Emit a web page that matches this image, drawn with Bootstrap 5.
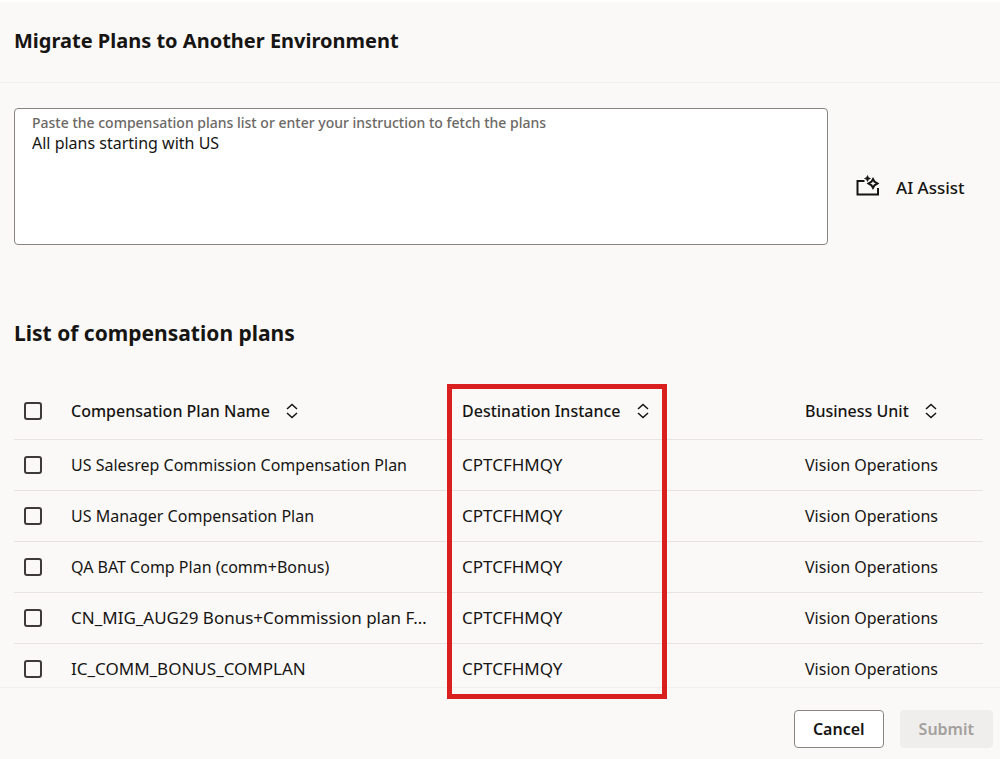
<!DOCTYPE html>
<html lang="en">
<head>
<meta charset="utf-8">
<meta name="viewport" content="width=device-width, initial-scale=1">
<title>Migrate Plans to Another Environment</title>
<link rel="stylesheet" href="https://cdn.jsdelivr.net/npm/bootstrap@5.3.0/dist/css/bootstrap.min.css">
<style>
  body {
    font-family: "Noto Sans", "Open Sans", sans-serif;
    font-size: 16px;
    line-height: 24px;
    color: #161513;
    background: #fbf9f8;
    border-top: 2px solid #fff;
  }
  .page-head { padding: 25px 14px 27px; border-bottom: 1px solid #f1efed; }
  .page-head h1 { font-size: 20px; line-height: 28px; font-weight: 700; }
  .page-main { padding: 25px 17px 0 14px; }
  .section-title { margin: 74px 0 37px; font-size: 21px; line-height: 28px; font-weight: 700; }

  .prompt-box {
    height: 137px;
    padding: 5px 17px;
    background: #fff;
    border: 1px solid #8b8580;
    border-radius: 4px;
  }
  .prompt-box label { font-size: 14px; line-height: 18px; font-weight: 500; color: #6b6865; }
  .prompt-box textarea { resize: none; outline: 0; line-height: 22px; color: inherit; }
  .assist-btn { width: 155px; padding: 22px 0 0 28px; color: inherit; font-size: 17px; font-weight: 500; }

  .plans { table-layout: fixed; }
  .plans th { height: 55px; padding: 0; font-weight: 500; white-space: nowrap; }
  .plans td { height: 51px; padding: 0; white-space: nowrap; }
  .plans tr { border-bottom: 1px solid #e6e3e1; }
  .plans tbody tr:last-child { border-bottom: 0; }
  .plans tbody tr:last-child td { height: 44px; padding-top: 8px; }
  .plans .col-check { width: 57px; padding-left: 10px; }
  .plans .col-name { width: 39%; }
  .plans .col-dest { width: 220px; padding-left: 15px; }
  .plans td.col-dest, .plans .plan-code { font-size: 17px; }
  .plans .col-unit { width: 316px; padding-left: 138px; }
  .plans input {
    appearance: none;
    width: 18px;
    height: 18px;
    border: 2px solid #3d3a37;
    border-radius: 3px;
    background: transparent;
  }
  .plans input:checked { background: #3d3a37; }
  .plans .col-name { width: auto; }
  .sort-btn { font-weight: 500; color: inherit; }
  .highlight-frame {
    top: 0;
    left: 0;
    width: 100%;
    height: 315px;
    border: 5px solid #d9201f;
    pointer-events: none;
  }

  .page-foot { padding: 22px 7px 11px; border-top: 1px solid #f1efed; }
  .page-foot .btn { height: 38px; padding: 0 18px; font-weight: 600; line-height: 24px; border-radius: 4px; }
  .btn-cancel, .btn-cancel:hover { color: #161513; background: #fff; border: 1px solid #8b8580; }
  .page-foot .btn-submit:disabled { color: #a3a09d; background: #f0eeec; border-color: #f0eeec; opacity: 1; }
</style>
</head>
<body>
<header class="page-head">
  <h1 class="m-0">Migrate Plans to Another Environment</h1>
</header>

<main class="page-main">
  <div class="d-flex align-items-center">
    <div class="prompt-box flex-grow-1 d-flex flex-column">
      <label for="prompt">Paste the compensation plans list or enter your instruction to fetch the plans</label>
      <textarea id="prompt" class="flex-grow-1 w-100 border-0 p-0 bg-transparent">All plans starting with US</textarea>
    </div>
    <button type="button" class="assist-btn btn border-0 d-flex align-items-center gap-3 rounded-0 text-nowrap">
      <svg class="mb-1" width="24" height="22" viewBox="0 0 24 22" fill="none" stroke="#161513" stroke-width="2" aria-hidden="true">
        <path d="M8.500 6H1.500v13.500h20.500V13"/>
        <path d="M17 4l1.500 2.700L21.500 8.500l-3 1.800L17 13l-1.500-2.700-3-1.800 3-1.800z"/>
        <path d="M11.500.5l1 2 2 1-2 1-1 2-1-2-2-1 2-1z" fill="#161513" stroke="#161513" stroke-width=".6"/>
      </svg>
      AI Assist
    </button>
  </div>

  <h2 class="section-title">List of compensation plans</h2>

  <table class="plans w-100" id="plans">
    <thead>
      <tr>
        <th class="col-check" scope="col"><input type="checkbox" class="d-block" aria-label="Select all plans"></th>
        <th class="col-name" scope="col">
          <button type="button" class="sort-btn border-0 bg-transparent p-0 d-flex align-items-center gap-3">Compensation Plan Name
            <svg width="12" height="16" viewBox="0 0 12 16" fill="none" stroke="#161513" stroke-width="1.500" aria-hidden="true"><path d="M1 6l5-4.500L11 6M1 10l5 4.500 5-4.500"/></svg></button>
        </th>
        <th class="col-dest position-relative" scope="col">
          <button type="button" class="sort-btn border-0 bg-transparent p-0 d-flex align-items-center gap-3">Destination Instance
            <svg width="12" height="16" viewBox="0 0 12 16" fill="none" stroke="#161513" stroke-width="1.500" aria-hidden="true"><path d="M1 6l5-4.500L11 6M1 10l5 4.500 5-4.500"/></svg></button>
          <div class="highlight-frame position-absolute"></div>
        </th>
        <th class="col-unit" scope="col">
          <button type="button" class="sort-btn border-0 bg-transparent p-0 d-flex align-items-center gap-3">Business Unit
            <svg width="12" height="16" viewBox="0 0 12 16" fill="none" stroke="#161513" stroke-width="1.500" aria-hidden="true"><path d="M1 6l5-4.500L11 6M1 10l5 4.500 5-4.500"/></svg></button>
        </th>
      </tr>
    </thead>
    <tbody>
      <tr><td class="col-check"><input type="checkbox" class="d-block" aria-labelledby="plan1"></td><td id="plan1">US Salesrep Commission Compensation Plan</td><td class="col-dest">CPTCFHMQY</td><td class="col-unit">Vision Operations</td></tr>
      <tr><td class="col-check"><input type="checkbox" class="d-block" aria-labelledby="plan2"></td><td id="plan2">US Manager Compensation Plan</td><td class="col-dest">CPTCFHMQY</td><td class="col-unit">Vision Operations</td></tr>
      <tr><td class="col-check"><input type="checkbox" class="d-block" aria-labelledby="plan3"></td><td id="plan3">QA BAT Comp Plan (comm+Bonus)</td><td class="col-dest">CPTCFHMQY</td><td class="col-unit">Vision Operations</td></tr>
      <tr><td class="col-check"><input type="checkbox" class="d-block" aria-labelledby="plan4"></td><td id="plan4" class="plan-code">CN_MIG_AUG29 Bonus+Commission plan F…</td><td class="col-dest">CPTCFHMQY</td><td class="col-unit">Vision Operations</td></tr>
      <tr><td class="col-check"><input type="checkbox" class="d-block" aria-labelledby="plan5"></td><td id="plan5" class="plan-code">IC_COMM_BONUS_COMPLAN</td><td class="col-dest">CPTCFHMQY</td><td class="col-unit">Vision Operations</td></tr>
    </tbody>
  </table>
</main>

<footer class="page-foot d-flex justify-content-end gap-3">
  <button type="button" class="btn btn-cancel">Cancel</button>
  <button type="button" class="btn btn-submit" disabled>Submit</button>
</footer>
<script src="https://cdn.jsdelivr.net/npm/bootstrap@5.3.0/dist/js/bootstrap.bundle.min.js"></script>
</body>
</html>
